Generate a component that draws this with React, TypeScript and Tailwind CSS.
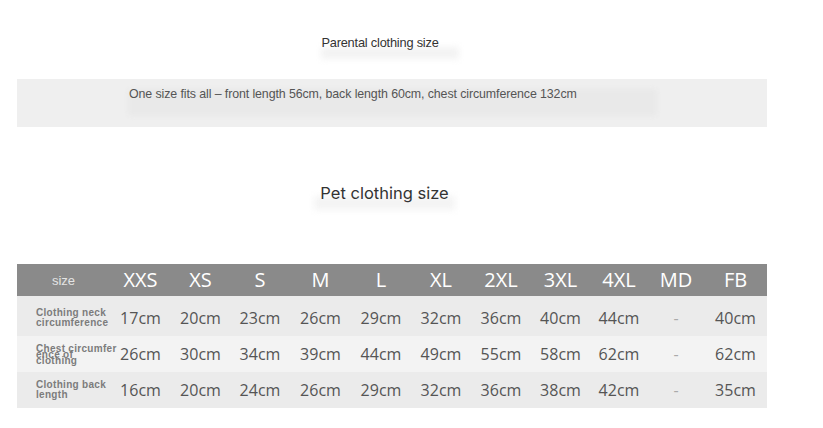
const SIZES = ["XXS", "XS", "S", "M", "L", "XL", "2XL", "3XL", "4XL", "MD", "FB"];

const ROWS = [
	{
		label: ["Clothing neck", "circumference"],
		values: ["17cm", "20cm", "23cm", "26cm", "29cm", "32cm", "36cm", "40cm", "44cm", "-", "40cm"],
		bg: "bg-[#ebebeb]",
		h: "h-[40px] pt-[3px]",
	},
	{
		label: ["Chest circumfer", "ence of", "clothing"],
		values: ["26cm", "30cm", "34cm", "39cm", "44cm", "49cm", "55cm", "58cm", "62cm", "-", "62cm"],
		bg: "bg-[#f3f3f3]",
		h: "h-[36px]",
		squashed: true,
	},
	{
		label: ["Clothing back", "length"],
		values: ["16cm", "20cm", "24cm", "26cm", "29cm", "32cm", "36cm", "38cm", "42cm", "-", "35cm"],
		bg: "bg-[#ebebeb]",
		h: "h-[36px]",
	},
];

const GRID =
	"grid grid-cols-[93px_61px_59px_60px_61px_60px_60px_60px_59px_58px_56px_63px]";

export default function App() {
	return (
		<div className="w-[823px] h-[428px] bg-white overflow-hidden relative">
			{/* Parental */}
			<div className="h-[79px] flex items-start justify-center pt-[35px] pr-[63px]">
				<span className="relative font-['Liberation_Sans',Arial,sans-serif] text-[12.8px] leading-[16px] text-[#333] tracking-[-0.2px]">
					<span className="absolute left-0 right-[-20px] top-[12px] h-[12px] bg-[#f3f3f3] blur-[3px]" />
					<span className="relative">Parental clothing size</span>
				</span>
			</div>

			<div className="ml-[17px] w-[750px] h-[48px] bg-[#efefef] relative">
				<div className="absolute left-[111px] top-[10px] w-[529px] h-[27px] bg-[#e9e9e9] blur-[2px] rounded" />
				<p className="relative pl-[112px] pt-[8px] font-['Liberation_Sans',Arial,sans-serif] text-[12.4px] leading-[14px] text-[#555] tracking-[-0.1px]">
					One size fits all – front length 56cm, back length 60cm, chest circumference 132cm
				</p>
			</div>

			{/* Pet */}
			<div className="h-[137px] flex items-start justify-center pt-[55px] pr-[54px]">
				<span className="relative font-['Inter',sans-serif] text-[16.5px] leading-[22px] text-[#333]">
					<span className="absolute left-[-6px] right-[-6px] top-[14px] h-[14px] bg-[#f4f4f4] blur-[3px]" />
					<span className="relative">Pet clothing size</span>
				</span>
			</div>

			<div className="ml-[17px] w-[750px]">
				<div className={`${GRID} h-[32px] bg-[#8a8a8a] items-center`}>
					<div className="text-center font-['Liberation_Sans',Arial,sans-serif] text-[13px] text-[#e4e4e4] pt-[1px]">
						size
					</div>
					{SIZES.map((s) => (
						<div
							key={s}
							className="text-center font-['Open_Sans',sans-serif] text-[20px] text-white leading-none"
						>
							{s}
						</div>
					))}
				</div>
				{ROWS.map((row) => (
					<div key={row.label[0]} className={`${GRID} ${row.h} ${row.bg} items-center`}>
						<div
							className={`pl-[19px] whitespace-nowrap font-['Liberation_Sans',Arial,sans-serif] font-bold text-[10px] tracking-[0.3px] text-[#7c7c7c] ${
								row.squashed ? "leading-[6px] pt-[1px]" : "leading-[10px]"
							}`}
						>
							{row.label.map((l) => (
								<div key={l}>{l}</div>
							))}
						</div>
						{row.values.map((v, i) => (
							<div
								key={i}
								className={`text-center font-['Open_Sans',sans-serif] text-[16px] leading-none ${
									v === "-" ? "text-[#aaa]" : "text-[#555]"
								}`}
							>
								{v}
							</div>
						))}
					</div>
				))}
			</div>
		</div>
	);
}
